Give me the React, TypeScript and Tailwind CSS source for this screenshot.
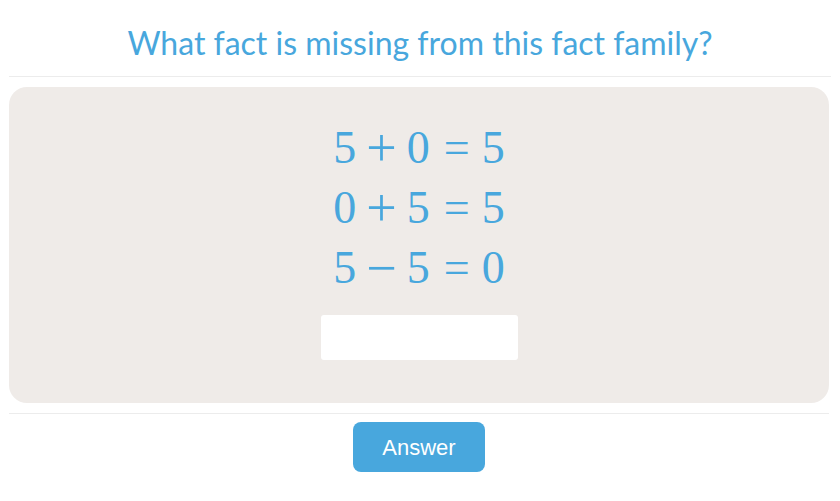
const equations = [
  ["5", "+", "0", "=", "5"],
  ["0", "+", "5", "=", "5"],
  ["5", "\u2212", "5", "=", "0"],
];

const Equation = ({ parts }: { parts: string[] }) => {
  return (
    <div className="flex items-center h-[60px] text-[46px] leading-none text-[#48a7dd] font-['Liberation_Serif',serif]">
      {parts.map((p, i) => (
        <span
          key={i}
          className={i % 2 === 1 ? (p === "=" ? "ml-[14px] mr-[12px]" : "mx-[10px] text-[54px] leading-none") : ""}
        >
          {p}
        </span>
      ))}
    </div>
  );
};

const App = () => {
  return (
    <div className="w-[840px] h-[501px] bg-white px-[9px] flex flex-col font-['Liberation_Sans',sans-serif]">
      <div className="h-[77px] flex items-end justify-center pb-[17px] border-b border-[#ececec]">
        <h1 className="text-[32px] leading-[32px] text-[#48a7dd] font-['Lato',sans-serif]">
          What fact is missing from this fact family?
        </h1>
      </div>

      <div className="mt-[10px] h-[316px] w-[820px] bg-[#efebe8] rounded-[18px] flex flex-col items-center pt-[31px]">
        {equations.map((eq, i) => (
          <Equation key={i} parts={eq} />
        ))}
        <div className="mt-[17px] w-[197px] h-[45px] bg-white rounded-[3px]"></div>
      </div>

      <div className="mt-[10px] w-[820px] border-t border-[#ececec] flex justify-center pt-[8px]">
        <button className="w-[132px] h-[50px] rounded-[8px] bg-[#48a7dd] text-white text-[22px]">
          Answer
        </button>
      </div>
    </div>
  );
};

export default App;
